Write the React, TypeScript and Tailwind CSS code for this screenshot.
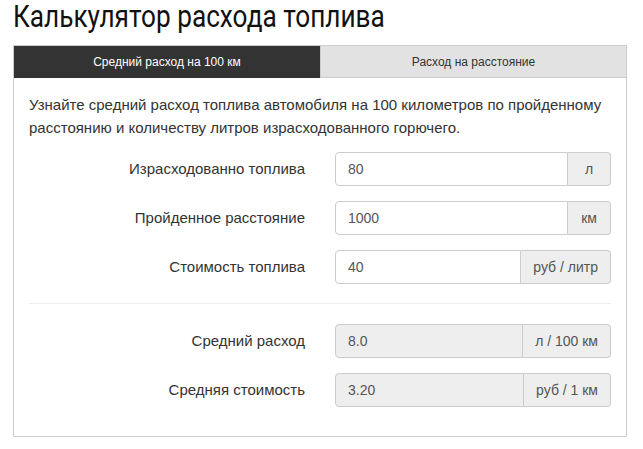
import React from "react";

type RowProps = { label: string; value: string; unit: string; readOnly?: boolean; unitW?: string };

function Row({ label, value, unit, readOnly, unitW }: RowProps) {
  return (
    <div className="flex items-center -mx-[15px] h-[34px]">
      <div className="w-1/2 pr-[15px] text-right text-[15px] text-[#333]">{label}</div>
      <div className="w-1/2 px-[15px] flex h-[34px]">
        <div
          className={
            "flex-1 flex items-center px-[12px] border border-[#ccc] rounded-l-[4px] text-[14px] text-[#555] " +
            (readOnly ? "bg-[#eee]" : "bg-white")
          }
        >
          {value}
        </div>
        <div
          className={
            "flex items-center justify-center px-[12px] border border-l-0 border-[#ccc] rounded-r-[4px] bg-[#eee] text-[14px] text-[#555] " +
            (unitW ?? "")
          }
        >
          {unit}
        </div>
      </div>
    </div>
  );
}

export default function App() {
  return (
    <div className="w-[643px] h-[449px] bg-white pl-[13px] pr-[16px] font-['Liberation_Sans',Arial,sans-serif]">
      <h1 className="font-['Roboto',sans-serif] text-[31px] leading-[34px] h-[45px] text-[#111] font-normal whitespace-nowrap">
        <span className="inline-block origin-left scale-x-[0.845]">Калькулятор расхода топлива</span>
      </h1>
      <div className="border border-[#ccc]">
        <div className="flex h-[32px] text-[12px]">
          <div className="w-1/2 bg-[#333] text-white flex items-center justify-center">
            Средний расход на 100 км
          </div>
          <div className="w-1/2 bg-[#e2e2e2] text-[#333] flex items-center justify-center border-b border-[#ccc] border-l border-l-[#ccc]">
            Расход на расстояние
          </div>
        </div>
        <div className="px-[15px] pt-[15px] pb-[29px]">
          <p className="text-[15px] leading-[23px] text-[#333] mb-[13px]">
            Узнайте средний расход топлива автомобиля на 100 километров по пройденному расстоянию и количеству литров израсходованного горючего.
          </p>
          <div className="flex flex-col gap-[15px]">
            <Row label="Израсходованно топлива" value="80" unit="л" unitW="w-[43px]" />
            <Row label="Пройденное расстояние" value="1000" unit="км" unitW="w-[43px]" />
            <Row label="Стоимость топлива" value="40" unit="руб / литр" />
          </div>
          <hr className="mt-[19px] mb-[20px] border-0 border-t border-[#eee]" />
          <div className="flex flex-col gap-[15px]">
            <Row label="Средний расход" value="8.0" unit="л / 100 км" readOnly />
            <Row label="Средняя стоимость" value="3.20" unit="руб / 1 км" readOnly />
          </div>
        </div>
      </div>
    </div>
  );
}
